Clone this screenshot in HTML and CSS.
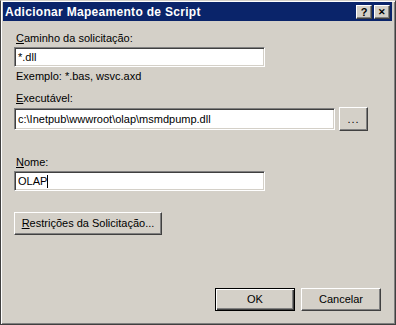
FILE: index.html
```html
<!DOCTYPE html>
<html>
<head>
<meta charset="UTF-8"/>
<title>Adicionar Mapeamento de Script</title>
<link rel="stylesheet" href="styles.css">
</head>
<body>
<div class="window">
    <div class="titlebar">
        <span class="title">Adicionar Mapeamento de Script</span>
        <span class="tbtn">?</span>
        <span class="tbtn close">&#x2715;</span>
    </div>
    <div class="content">
        <div class="label l1"><u>C</u>aminho da solicitação:</div>
        <div class="field short">*.dll</div>
        <div class="label hint">Exemplo: *.bas, wsvc.axd</div>
        <div class="label l2"><u>E</u>xecutável:</div>
        <div class="row">
            <div class="field long">c:\Inetpub\wwwroot\olap\msmdpump.dll</div>
            <div class="btn browse">...</div>
        </div>
        <div class="label l3"><u>N</u>ome:</div>
        <div class="field short name">OLAP<span class="caret"></span></div>
        <div class="btn restrict"><u>R</u>estrições da Solicitação...</div>
        <div class="spacer"></div>
        <div class="actions">
            <div class="btn ok">OK</div>
            <div class="btn cancel">Cancelar</div>
        </div>
    </div>
</div>
</body>
</html>
```

FILE: styles.css
```css
html, body {
    margin: 0;
    background: #d4d0c8;
}
body {
    font-family: "Liberation Sans", Arial, sans-serif;
    font-size: 11px;
    color: #000;
}
.window {
    width: 396px;
    height: 325px;
    box-sizing: border-box;
    border: 1px solid #404040;
    border-top-color: #d4d0c8;
    box-shadow: inset 1px 1px #fff, inset -1px -1px #808080;
    padding: 1px 3px 3px 2px;
    display: flex;
    flex-direction: column;
}
.titlebar {
    height: 19px;
    background: #0a246a;
    display: flex;
    align-items: center;
    padding: 0 2px 0 2px;
    gap: 2px;
}
.title {
    flex: 1;
    color: #fff;
    font-weight: bold;
    font-size: 12px;
    letter-spacing: 0.3px;
}
.tbtn {
    width: 16px;
    height: 14px;
    box-sizing: border-box;
    background: #d4d0c8;
    border: 1px solid #404040;
    border-top-color: #fff;
    border-left-color: #fff;
    box-shadow: inset -1px -1px #808080;
    font-weight: bold;
    font-size: 11px;
    line-height: 12px;
    text-align: center;
}
.tbtn.close {
    font-size: 9px;
}
.content {
    flex: 1;
    display: flex;
    flex-direction: column;
    align-items: flex-start;
    padding: 11px 0 10px 11px;
}
.label {
    height: 13px;
    line-height: 13px;
    padding-left: 2px;
}
.l1 { margin-bottom: 2px; }
.hint { margin-top: 3px; }
.l2 { margin-top: 9px; margin-bottom: 2px; }
.l3 { margin-top: 25px; margin-bottom: 2px; }
.field {
    height: 20px;
    box-sizing: border-box;
    background: #fff;
    border: 1px solid #fff;
    border-top-color: #808080;
    border-left-color: #808080;
    box-shadow: inset 1px 1px #404040, inset -1px -1px #d4d0c8;
    padding: 0 3px;
    line-height: 18px;
    white-space: nowrap;
    overflow: hidden;
}
.short { width: 251px; }
.long { width: 321px; height: 22px; line-height: 20px; }
.row {
    display: flex;
    align-items: center;
    gap: 4px;
}
.btn {
    box-sizing: border-box;
    background: #d4d0c8;
    border: 1px solid #404040;
    border-top-color: #fff;
    border-left-color: #fff;
    box-shadow: inset -1px -1px #808080;
    text-align: center;
}
.browse {
    width: 29px;
    height: 24px;
    line-height: 22px;
    letter-spacing: 1px;
}
.caret {
    display: inline-block;
    width: 0;
    height: 13px;
    border-left: 1px solid #000;
    vertical-align: -3px;
}
.restrict {
    margin-top: 21px;
    width: 148px;
    height: 23px;
    line-height: 21px;
}
.spacer { flex: 1; }
.actions {
    align-self: flex-end;
    display: flex;
    gap: 6px;
    margin-right: 11px;
}
.ok, .cancel {
    width: 80px;
    height: 23px;
    line-height: 21px;
}
.ok {
    border: 1px solid #000;
    box-shadow: inset 1px 1px #fff, inset -1px -1px #404040, inset -2px -2px #808080;
}
```
